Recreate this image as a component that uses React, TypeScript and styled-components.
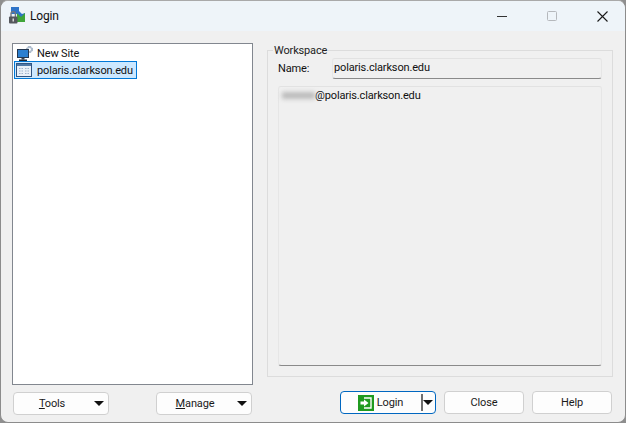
import { FC } from "react";
import styled, { createGlobalStyle } from "styled-components";

const Global = createGlobalStyle`
    html, body {
        margin: 0;
        padding: 0;
        background: #8f8f8f;
    }
    body {
        font-family: Roboto, "Open Sans", sans-serif;
        font-size: 11px;
        letter-spacing: -0.15px;
        color: #111;
    }
`;

const Window = styled.div`
    width: 626px;
    height: 423px;
    box-sizing: border-box;
    border: 1px solid #8c8c8c;
    border-top-color: #a9a9a9;
    border-radius: 8px;
    overflow: hidden;
    background: #f0f0f0;
    display: flex;
    flex-direction: column;
`;

const TitleBar = styled.div`
    height: 30px;
    flex: none;
    background: #eef4f9;
    display: flex;
    align-items: center;
    padding-left: 7px;
    gap: 4px;
`;

const Title = styled.span`
    font-size: 12px;
    flex: 1;
`;

const Caption = styled.div`
    width: 46px;
    height: 30px;
    display: flex;
    align-items: center;
    justify-content: center;
`;

const Body = styled.div`
    display: grid;
    grid-template-columns: 241px 346px;
    column-gap: 14px;
    padding: 12px 0 0 11px;
`;

const LeftCol = styled.div`
    display: flex;
    flex-direction: column;
`;

const RightCol = styled.div`
    display: flex;
    flex-direction: column;
`;

const SiteList = styled.div`
    height: 342px;
    box-sizing: border-box;
    background: #fff;
    border: 1px solid #82878f;
    padding: 1px 2px;
    display: flex;
    flex-direction: column;
    align-items: flex-start;
`;

const SiteRow = styled.div<{ $selected?: boolean }>`
    height: 16px;
    display: flex;
    align-items: center;
    box-sizing: border-box;
    padding: 0 3px 0 1px;
    margin: ${p => (p.$selected ? "1px 0 0" : "0")};
    background: ${p => (p.$selected ? "#cce8ff" : "transparent")};
    outline: ${p => (p.$selected ? "1px solid #0078d7" : "none")};
    white-space: nowrap;
`;

const RowIcon = styled.span`
    width: 21px;
    flex: none;
    display: flex;
    align-items: center;
`;

const ButtonRow = styled.div<{ $end?: boolean }>`
    display: flex;
    justify-content: ${p => (p.$end ? "flex-end" : "space-between")};
    gap: ${p => (p.$end ? "8px" : "0")};
    padding: ${p => (p.$end ? "14px 0 0" : "7px 1px 0 1px")};
    margin-right: ${p => (p.$end ? "1px" : "0")};
`;

const Button = styled.div<{ $width: number; $focused?: boolean; $menu?: boolean }>`
    width: ${p => p.$width}px;
    height: 23px;
    box-sizing: border-box;
    background: #fdfdfd;
    border: 1px solid ${p => (p.$focused ? "#0067c0" : "#d0d0d0")};
    border-radius: 4px;
    display: flex;
    align-items: center;
    justify-content: center;
    position: relative;
    padding-right: ${p => (p.$menu ? "18px" : "0")};
    color: #1a1a1a;
`;

const ButtonLabel = styled.span`
    u {
        text-underline-offset: 1px;
    }
`;

const MenuArrow = styled.span<{ $tight?: boolean }>`
    position: absolute;
    right: ${p => (p.$tight ? "2px" : "4px")};
    top: 8px;
    width: 0;
    height: 0;
    border-left: 5px solid transparent;
    border-right: 5px solid transparent;
    border-top: 5px solid #111;
`;

const LoginInner = styled.div`
    display: flex;
    align-items: center;
    gap: 3px;
    margin-right: 15px;
`;

const SplitLine = styled.span`
    position: absolute;
    right: 12px;
    top: 2px;
    bottom: 2px;
    width: 2px;
    background: #6e6e6e;
`;

const Group = styled.fieldset`
    height: 333px;
    box-sizing: border-box;
    margin: 1px 0 0;
    border: 1px solid #dcdcdc;
    padding: 0 10px 10px 10px;
    min-width: 0;
`;

const Legend = styled.legend`
    padding: 0 1px;
    margin-left: -5px;
    line-height: 13px;
    color: #222;
`;

const NameRow = styled.div`
    display: flex;
    align-items: center;
    height: 21px;
    margin-top: 1px;
`;

const NameLabel = styled.span`
    width: 54px;
    flex: none;
`;

const NameField = styled.div`
    flex: 1;
    height: 21px;
    box-sizing: border-box;
    background: #f0f0f0;
    border-top: 1px solid #e2e2e2;
    border-left: 1px solid #e6e6e6;
    border-right: 1px solid #e6e6e6;
    border-bottom: 1px solid #8a8a8a;
    border-radius: 3px;
    padding-left: 1px;
    line-height: 18px;
`;

const Details = styled.div`
    height: 280px;
    margin-top: 7px;
    box-sizing: border-box;
    background: #f0f0f0;
    border-top: 1px solid #e2e2e2;
    border-left: 1px solid #e6e6e6;
    border-right: 1px solid #e6e6e6;
    border-bottom: 1px solid #8a8a8a;
    border-radius: 3px;
    padding: 1px 3px 0;
    line-height: 16px;
`;

const Blurred = styled.span`
    display: inline-block;
    width: 33px;
    height: 7px;
    vertical-align: 0;
    background: #bcbcbc;
    filter: blur(2.2px);
`;

const TitleIcon: FC = () => (
    <svg width="18" height="20" viewBox="0 0 18 20">
        <path d="M3 1 H11 V5 L14 8 L17 7 V16 H9 V8 H3 Z" fill="#2f74c8" />
        <path d="M9 7 L13 11 L17 7 V16 H9 Z" fill="#3fa53a" />
        <path d="M3 11 V7.8 a2.2 2.2 0 0 1 4.4 0 V11" fill="none" stroke="#74777c" strokeWidth="1.4" />
        <rect x="1" y="10.5" width="8.5" height="7" fill="#55585e" rx="1" />
        <rect x="4.5" y="12.5" width="1.5" height="3" fill="#d8d8d8" />
    </svg>
);

const SiteIcon: FC = () => (
    <svg width="18" height="16" viewBox="0 0 18 16">
        <path d="M12 1 h3 l0.6 1.4 l1.4 0.6 v3 l-1.4 0.6 l-0.6 1.4 h-3 l-0.6 -1.4 l-1.4 -0.6 v-3 l1.4 -0.6 z" fill="#aebccd" />
        <circle cx="13.5" cy="4.5" r="1.4" fill="#fff" />
        <rect x="1.5" y="4.5" width="11" height="8" fill="#2b7fd0" stroke="#23364f" strokeWidth="1" />
        <rect x="5.5" y="13" width="3" height="1.5" fill="#39414d" />
        <rect x="3" y="14.5" width="8" height="1.5" fill="#1f2733" />
    </svg>
);

const HostIcon: FC = () => (
    <svg width="16" height="14" viewBox="0 0 16 14">
        <rect x="0.5" y="0.5" width="15" height="13" fill="#e9f0f8" stroke="#2f5582" />
        <rect x="1" y="1" width="14" height="2" fill="#4f78a6" />
        <path d="M3 5h1.5v1H3zM5.5 5H7v1H5.5zM9 5h1.5v1H9zM11.5 5H13v1h-1.5zM3 7.5h1.5v1H3zM5.5 7.5H7v1H5.5zM9 7.5h1.5v1H9zM11.5 7.5H13v1h-1.5zM3 10h1.5v1H3zM5.5 10H7v1H5.5zM9 10h1.5v1H9zM11.5 10H13v1h-1.5z" fill="#9db2cc" />
    </svg>
);

const LoginIcon: FC = () => (
    <svg width="16" height="16" viewBox="0 0 16 16">
        <rect width="16" height="16" fill="#1f9a1f" />
        <path d="M6 3 H13 V13 H6" fill="none" stroke="#fff" strokeWidth="1.4" />
        <path d="M2.5 6.5 H6 V4.5 L10.5 8 L6 11.5 V9.5 H2.5 Z" fill="#fff" />
    </svg>
);

const App: FC = () => {
    return (
        <Window>
            <Global />
            <TitleBar>
                <TitleIcon />
                <Title>Login</Title>
                <Caption>
                    <svg width="10" height="10" viewBox="0 0 10 10">
                        <path d="M0 5.5 H10" stroke="#333" strokeWidth="1" />
                    </svg>
                </Caption>
                <Caption>
                    <svg width="10" height="10" viewBox="0 0 10 10">
                        <rect x="0.5" y="0.5" width="9" height="9" rx="1" fill="none" stroke="#b5b8bc" />
                    </svg>
                </Caption>
                <Caption>
                    <svg width="11" height="11" viewBox="0 0 11 11">
                        <path d="M0.5 0.5 L10.5 10.5 M10.5 0.5 L0.5 10.5" stroke="#1a1a1a" strokeWidth="1.1" />
                    </svg>
                </Caption>
            </TitleBar>
            <Body>
                <LeftCol>
                    <SiteList>
                        <SiteRow>
                            <RowIcon><SiteIcon /></RowIcon>
                            New Site
                        </SiteRow>
                        <SiteRow $selected>
                            <RowIcon><HostIcon /></RowIcon>
                            polaris.clarkson.edu
                        </SiteRow>
                    </SiteList>
                    <ButtonRow>
                        <Button $width={96} $menu>
                            <ButtonLabel><u>T</u>ools</ButtonLabel>
                            <MenuArrow />
                        </Button>
                        <Button $width={96} $menu>
                            <ButtonLabel><u>M</u>anage</ButtonLabel>
                            <MenuArrow />
                        </Button>
                    </ButtonRow>
                </LeftCol>
                <RightCol>
                    <Group>
                        <Legend>Workspace</Legend>
                        <NameRow>
                            <NameLabel>Name:</NameLabel>
                            <NameField>polaris.clarkson.edu</NameField>
                        </NameRow>
                        <Details>
                            <Blurred />@polaris.clarkson.edu
                        </Details>
                    </Group>
                    <ButtonRow $end>
                        <Button $width={96} $focused>
                            <LoginInner>
                                <LoginIcon />
                                Login
                            </LoginInner>
                            <SplitLine />
                            <MenuArrow $tight />
                        </Button>
                        <Button $width={80}>Close</Button>
                        <Button $width={80}>Help</Button>
                    </ButtonRow>
                </RightCol>
            </Body>
        </Window>
    );
};

export default App;
